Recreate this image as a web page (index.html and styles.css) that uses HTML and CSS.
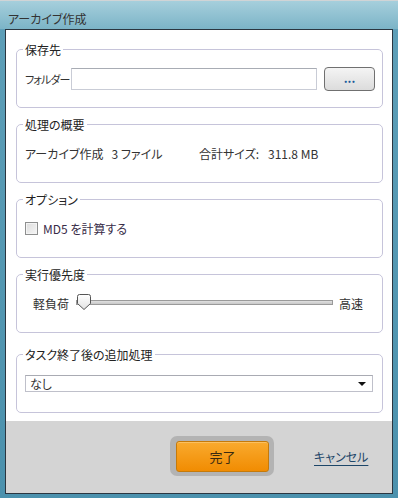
FILE: index.html
```html
<!DOCTYPE html>
<html lang="ja">
<head>
    <meta charset="UTF-8">
    <title>アーカイブ作成</title>
    <link rel="stylesheet" href="styles.css">
</head>
<body>
    <div class="window">
        <div class="titlebar">アーカイブ作成</div>
        <div class="client">
            <div class="content">
                <fieldset class="group">
                    <legend>保存先</legend>
                    <div class="group-body">
                        <span class="label">フォルダー</span>
                        <input type="text" class="path-input">
                        <button class="browse-btn">...</button>
                    </div>
                </fieldset>

                <fieldset class="group">
                    <legend>処理の概要</legend>
                    <div class="group-body">
                        <span class="count">アーカイブ作成&nbsp;&nbsp; 3 ファイル</span>
                        <span class="size-label">合計サイズ:</span>
                        <span class="size">311.8 MB</span>
                    </div>
                </fieldset>

                <fieldset class="group">
                    <legend>オプション</legend>
                    <div class="group-body">
                        <span class="checkbox"></span>
                        <span class="check-label">MD5 を計算する</span>
                    </div>
                </fieldset>

                <fieldset class="group">
                    <legend>実行優先度</legend>
                    <div class="group-body slider-row">
                        <span class="slider-end">軽負荷</span>
                        <div class="slider">
                            <div class="track"></div>
                            <svg class="thumb" width="16" height="17" viewBox="0 0 16 17">
                                <defs>
                                    <linearGradient id="tg" x1="0" y1="0" x2="0" y2="1">
                                        <stop offset="0" stop-color="#ffffff"/>
                                        <stop offset="1" stop-color="#e2e2e2"/>
                                    </linearGradient>
                                </defs>
                                <path d="M1.5 2.5 Q1.5 0.5 3.5 0.5 L12.5 0.5 Q14.5 0.5 14.5 2.5 L14.5 9.5 L8 15.5 L1.5 9.5 Z" fill="url(#tg)" stroke="#555" stroke-width="1"/>
                            </svg>
                        </div>
                        <span class="slider-end">高速</span>
                    </div>
                </fieldset>

                <fieldset class="group last">
                    <legend>タスク終了後の追加処理</legend>
                    <div class="group-body">
                        <div class="select">
                            <span>なし</span>
                            <span class="arrow"></span>
                        </div>
                    </div>
                </fieldset>
            </div>
            <div class="footer">
                <div class="ok-halo"><button class="ok-btn">完了</button></div>
                <a href="#" class="cancel">キャンセル</a>
            </div>
        </div>
    </div>
</body>
</html>
```

FILE: styles.css
```css
* { box-sizing: border-box; }
body { margin: 0; padding: 0; background: #5c9cb5; font-family: "Noto Sans CJK JP", "Noto Sans", sans-serif; font-size: 12px; color: #333; font-feature-settings: "palt"; }
.window { width: 398px; height: 498px; background: linear-gradient(#5e9fb8, #4b91ad); display: flex; flex-direction: column; }
.titlebar { height: 29px; padding: 9px 0 0 8px; line-height: 17px; border-top: 1px solid #d0d4d6; background: linear-gradient(#a6cfdc, #7cb4c7); color: #333; }
.client { margin-left: 5px; width: 388px; height: 465px; border: 1px solid #2b3640; background: #fff; display: flex; flex-direction: column; }
.content { height: 391px; padding: 11px 9px 0 10px; }
.group { margin: 0 0 8px 0; padding: 0 6px; border: 1px solid #c6c4da; border-radius: 5px; }
.group.last { margin-top: 13px; }
.group legend { padding: 0 2px; line-height: 17px; color: #222; }
.group-body { height: 49px; padding: 0 0 8px 2px; display: flex; align-items: center; white-space: nowrap; }
.label { width: 46px; flex: none; font-size: 11px; letter-spacing: -0.9px; }
.path-input { flex: none; width: 246px; height: 22px; margin: 0; border: 1px solid #c9ccd6; border-top-color: #a8acb4; padding: 0 3px; font: inherit; }
.browse-btn { flex: none; width: 51px; height: 24px; margin-left: 7px; border: 1px solid #707070; border-radius: 4px; background: linear-gradient(#f4f4f4, #dcdcdc); color: #1a5a9a; font: inherit; font-weight: bold; padding: 0 0 2px 0; }
.count { width: 174px; }
.size-label { width: 69px; }
.checkbox { width: 13px; height: 13px; border: 1px solid #8e8f8f; background: linear-gradient(135deg, #dcdcdc, #f6f6f6); box-shadow: inset 0 0 0 1px #f4f4f4; margin-right: 5px; }
.check-label { color: #382c48; }
.slider-row { padding-left: 10px; }
.slider { position: relative; width: 257px; height: 17px; margin: 0 6px 0 7px; }
.track { position: absolute; left: 0; right: 0; top: 5px; height: 5px; border: 1px solid #9a9a9a; background: linear-gradient(#e0e0e0, #c8c8c8); }
.thumb { position: absolute; left: 0; top: -1px; }
.select { width: 348px; height: 17px; border: 1px solid #bfc0ca; border-top-color: #a9abb3; display: flex; align-items: center; justify-content: space-between; padding: 0 5px 0 4px; line-height: 15px; }
.arrow { width: 0; height: 0; border-left: 4px solid transparent; border-right: 4px solid transparent; border-top: 4px solid #111; margin-right: 1px; }
.footer { flex: 1; background: #d4d4d4; display: flex; align-items: flex-start; padding: 15px 0 0 164px; }
.ok-halo { width: 104px; height: 40px; border-radius: 7px; background: #b3b3b3; padding: 5px 0 0 6px; }
.ok-btn { width: 93px; height: 31px; border: 1px solid #c57a0a; border-radius: 3px; background: linear-gradient(#f9aa2e, #f18c02); color: #3a2a10; font: inherit; font-size: 13px; padding: 0; box-shadow: inset 0 1px 0 #fbc060; }
.cancel { margin: 12px 0 0 40px; color: #1d4668; text-decoration: underline; text-underline-offset: 3px; text-decoration-thickness: 1px; font-size: 12px; }
```
